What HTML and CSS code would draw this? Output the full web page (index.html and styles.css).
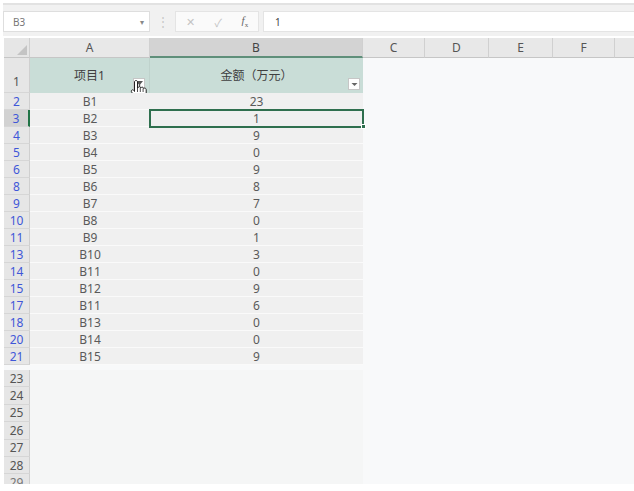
FILE: index.html
```html
<!DOCTYPE html>
<html>
<head>
<meta charset="utf-8">
<link rel="stylesheet" href="styles.css">
</head>
<body>
<div class="app">
  <div class="toolbar">
    <div class="namebox"><span class="ref">B3</span><span class="dd">&#9662;</span></div>
    <div class="sep">&#8942;</div>
    <div class="fbtns">
      <span class="fb">&#10005;</span>
      <span class="fb">&#10003;</span>
      <span class="fb fx"><i>f</i><sub>x</sub></span>
    </div>
    <div class="finput">1</div>
  </div>

  <div class="sheet">
    <div class="row hdr">
      <div class="rh corner"><svg width="10" height="10" viewBox="0 0 10 10"><polygon points="10,0 10,10 0,10" fill="#c4c4c4"/></svg></div>
      <div class="ch a">A</div>
      <div class="ch b sel">B</div>
      <div class="ch c">C</div>
      <div class="ch d">D</div>
      <div class="ch e">E</div>
      <div class="ch f">F</div>
      <div class="ch g"></div>
    </div>

    <div class="row r1">
      <div class="rh">1</div>
      <div class="c a head">项目1<span class="fbtn fa"><svg width="9" height="9" viewBox="0 0 9 9"><path d="M1 1h7L5.2 4.5V8L3.8 7V4.5z" fill="#555"/></svg></span>
        <svg class="hand" width="18" height="22" viewBox="0 0 18 22"><path d="M6 1.5c.9 0 1.5.6 1.5 1.5v6l.4-.1c.2-.8.8-1.2 1.5-1.2s1.3.5 1.4 1.2c.3-.5.8-.8 1.4-.8.8 0 1.4.6 1.4 1.4.3-.3.7-.4 1.1-.4.9 0 1.5.7 1.5 1.6v4.8c0 2.8-2 5.3-5 5.3H9.2c-1.7 0-3-.8-4-2.2L1.6 13c-.5-.7-.3-1.6.4-2 .6-.4 1.4-.2 1.800.4L4.5 12.5V3c0-.9.6-1.5 1.5-1.5z" fill="#fff" stroke="#222" stroke-width="1"/><path d="M7.5 9v4M10.3 9v4M13.1 9.5v3.5" stroke="#222" stroke-width=".8"/></svg>
      </div>
      <div class="c b head">金额（万元）<span class="fbtn fbb"><svg width="7" height="5" viewBox="0 0 7 5"><polygon points="0.5,1 6.5,1 3.5,4" fill="#666"/></svg></span></div>
      <div class="c rest"></div>
    </div>

    <div class="row d"><div class="rh f">2</div><div class="c a">B1</div><div class="c b">23</div><div class="c rest"></div></div>
    <div class="row d"><div class="rh f selr">3</div><div class="c a">B2</div><div class="c b active">1<span class="handle"></span></div><div class="c rest"></div></div>
    <div class="row d"><div class="rh f">4</div><div class="c a">B3</div><div class="c b">9</div><div class="c rest"></div></div>
    <div class="row d"><div class="rh f">5</div><div class="c a">B4</div><div class="c b">0</div><div class="c rest"></div></div>
    <div class="row d"><div class="rh f">6</div><div class="c a">B5</div><div class="c b">9</div><div class="c rest"></div></div>
    <div class="row d"><div class="rh f">8</div><div class="c a">B6</div><div class="c b">8</div><div class="c rest"></div></div>
    <div class="row d"><div class="rh f">9</div><div class="c a">B7</div><div class="c b">7</div><div class="c rest"></div></div>
    <div class="row d"><div class="rh f">10</div><div class="c a">B8</div><div class="c b">0</div><div class="c rest"></div></div>
    <div class="row d"><div class="rh f">11</div><div class="c a">B9</div><div class="c b">1</div><div class="c rest"></div></div>
    <div class="row d"><div class="rh f">13</div><div class="c a">B10</div><div class="c b">3</div><div class="c rest"></div></div>
    <div class="row d"><div class="rh f">14</div><div class="c a">B11</div><div class="c b">0</div><div class="c rest"></div></div>
    <div class="row d"><div class="rh f">15</div><div class="c a">B12</div><div class="c b">9</div><div class="c rest"></div></div>
    <div class="row d"><div class="rh f">17</div><div class="c a">B11</div><div class="c b">6</div><div class="c rest"></div></div>
    <div class="row d"><div class="rh f">18</div><div class="c a">B13</div><div class="c b">0</div><div class="c rest"></div></div>
    <div class="row d"><div class="rh f">20</div><div class="c a">B14</div><div class="c b">0</div><div class="c rest"></div></div>
    <div class="row d"><div class="rh f">21</div><div class="c a">B15</div><div class="c b">9</div><div class="c rest"></div></div>

    <div class="row e first"><div class="rh">23</div><div class="c a"></div><div class="c b"></div><div class="c rest"></div></div>
    <div class="row e"><div class="rh">24</div><div class="c a"></div><div class="c b"></div><div class="c rest"></div></div>
    <div class="row e"><div class="rh">25</div><div class="c a"></div><div class="c b"></div><div class="c rest"></div></div>
    <div class="row e"><div class="rh">26</div><div class="c a"></div><div class="c b"></div><div class="c rest"></div></div>
    <div class="row e"><div class="rh">27</div><div class="c a"></div><div class="c b"></div><div class="c rest"></div></div>
    <div class="row e"><div class="rh">28</div><div class="c a"></div><div class="c b"></div><div class="c rest"></div></div>
    <div class="row e last"><div class="rh">29</div><div class="c a"></div><div class="c b"></div><div class="c rest"></div></div>
  </div>
</div>
</body>
</html>
```

FILE: styles.css
```css
* { box-sizing: border-box; }
html, body { margin: 0; padding: 0; background: #ffffff; }
body { font-family: "Noto Sans", "Noto Sans CJK SC", sans-serif; color: #555; }

.app { width: 634px; height: 491px; overflow: hidden; padding: 3px 0 0 3px; }

.toolbar {
  height: 33px;
  background: #f1f1f1;
  border-top: 2px solid #e2e2e2;
  display: flex;
  align-items: center;
  padding-top: 2px;
}
.namebox {
  width: 147px; height: 21px;
  background: #fff;
  border: 1px solid #dedede;
  display: flex; align-items: center; justify-content: space-between;
  padding: 0 5px 0 9px;
  font-size: 10px; color: #777;
}
.namebox .dd { font-size: 8px; color: #888; }
.sep { width: 25px; text-align: center; color: #c8c8c8; font-size: 12px; }
.fbtns {
  width: 84px; height: 21px;
  background: #fafafa;
  border: 1px solid #e4e4e4;
  display: flex; align-items: center; justify-content: space-around;
  color: #c4c4c4; font-size: 11px;
}
.fb.fx { color: #666; font-family: "Liberation Serif", serif; font-size: 11px; }
.fb.fx sub { font-size: 7px; }
.finput {
  flex: 1; height: 21px; margin-left: 4px;
  background: #fff;
  border: 1px solid #e4e4e4; border-right: none;
  font-size: 10px; color: #444;
  display: flex; align-items: center; padding-left: 11px;
}

.sheet { margin-top: 2px; margin-left: 1px; background: #f8f9fa; height: 446px; overflow: hidden; }
.row { display: flex; height: 17px; }
.rh {
  width: 26px; flex: none;
  background: #e6e6e6;
  border-right: 1px solid #cfcfcf;
  border-bottom: 1px solid #d6d6d6;
  font-size: 12px; color: #555;
  display: flex; align-items: center; justify-content: center;
}
.rh.f { color: #3f57d8; }
.rh.selr { background: #d2d2d2; border-right: 2px solid #217346; }
.c { flex: none; display: flex; align-items: center; justify-content: center; font-size: 12px; position: relative; }
.a { width: 120px; }
.b { width: 213px; }
.rest { flex: 1; }

.hdr { height: 20px; }
.hdr .rh { justify-content: flex-end; align-items: flex-end; padding: 0 2px 2px 0; border-bottom: 1px solid #c6c6c6; }
.ch {
  flex: none; height: 20px;
  background: #e8e8e8;
  border-right: 1px solid #d0d0d0;
  border-bottom: 1px solid #c6c6c6;
  display: flex; align-items: center; justify-content: center;
  font-size: 12px; color: #555;
}
.ch.sel { background: #d3d3d3; border-bottom: 2px solid #5f8f7a; color: #444; }
.ch.c { width: 62px; }
.ch.d { width: 64px; }
.ch.e { width: 64px; }
.ch.f { width: 62px; }
.ch.g { flex: 1; border-right: none; }

.r1 { height: 35px; }
.r1 .rh { align-items: flex-end; padding-bottom: 2px; }
.c.head { background: #c9ddd7; color: #3f3f3f; font-size: 12px; padding-bottom: 2px; }
.c.a.head { border-right: 1px solid #bfd2cc; }
.fbtn {
  position: absolute; bottom: 3px;
  width: 12px; height: 12px;
  background: #fff; border: 1px solid #c6c6c6;
  display: flex; align-items: center; justify-content: center;
}
.fa { right: 4px; }
.fbb { right: 3px; }
.hand { position: absolute; right: 1px; top: 21px; }

.d .c.a, .d .c.b { background: #f0f0f0; border-bottom: 1px solid #fafafa; color: #5a5a5a; }
.c.active { outline: 2px solid #2f6f4e; outline-offset: -1px; z-index: 2; }
.handle { position: absolute; right: -3px; bottom: -3px; width: 5px; height: 5px; background: #2f6f4e; border: 1px solid #fff; }

.row.e { height: 17.4px; }
.row.e.first { margin-top: 5px; }
.e .c.a, .e .c.b { background: #f5f6f6; }
.e .rh { color: #555; }
.row.e.last .rh { color: #777; align-items: flex-start; }
```
